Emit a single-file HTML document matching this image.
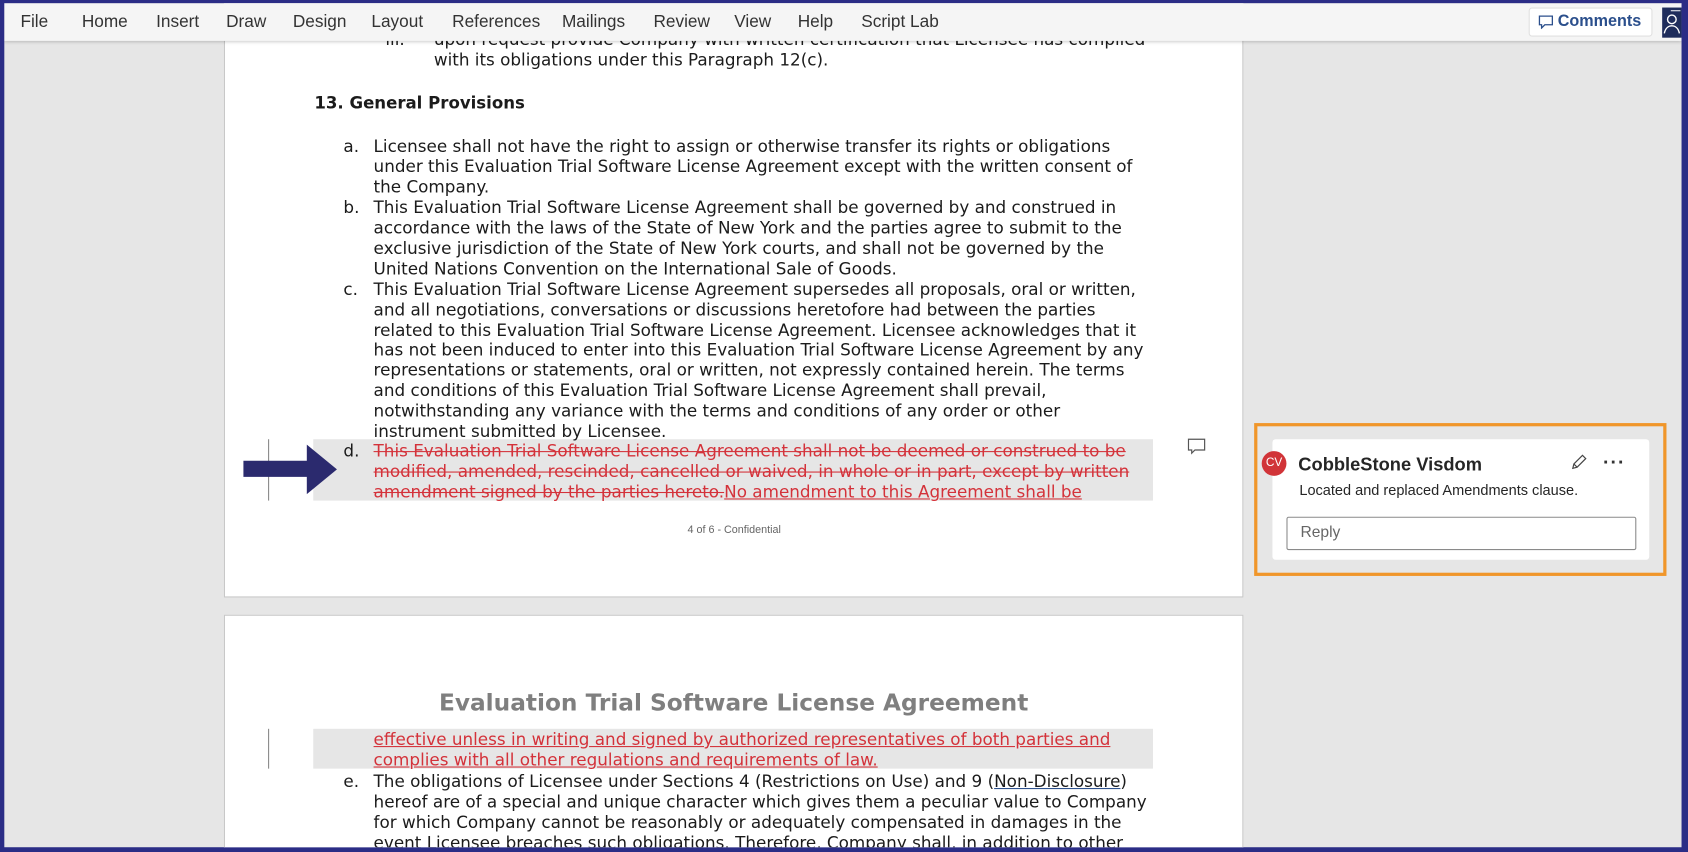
<!DOCTYPE html>
<html><head><meta charset="utf-8"><style>
html,body{margin:0;padding:0;width:1688px;height:851px;overflow:hidden;background:#2b2d86;}
#w{position:absolute;left:0;top:0;width:1568px;height:791px;transform:scale(1.07653);transform-origin:0 0;background:#2b2d86;overflow:hidden;font-family:"DejaVu Sans",Verdana,sans-serif;}
#bg{position:absolute;left:4px;top:3px;width:1558px;height:784px;background:#e6e6e6;overflow:hidden;}
.menu{position:absolute;left:0;top:0;width:1558px;height:35px;background:#f5f5f5;box-shadow:0 1px 3px rgba(0,0,0,.2);z-index:5;font-family:"Liberation Sans",sans-serif;font-size:16px;color:#333;}
.menu span{position:absolute;top:9px;}
.page{position:absolute;background:#fff;border:1px solid #c8c8c8;}
.l{position:absolute;white-space:nowrap;font-size:15.6px;line-height:19px;color:#1b1b1b;}
.r{color:#d4323a;}
.s{text-decoration:line-through;}
.u{text-decoration:underline;}
</style></head><body><div id="w"><div id="bg">
<div class="menu">
<span style="left:15px">File</span><span style="left:72px">Home</span><span style="left:141px">Insert</span><span style="left:206px">Draw</span><span style="left:268px">Design</span><span style="left:341px">Layout</span><span style="left:416px">References</span><span style="left:518px">Mailings</span><span style="left:603px">Review</span><span style="left:678px">View</span><span style="left:737px">Help</span><span style="left:796px">Script Lab</span>
<div style="position:absolute;left:1416px;top:4px;width:113px;height:25px;background:#fff;border:1px solid #e0e0e0;border-radius:3px;color:#2b4f8c;font-weight:bold;font-size:15px;">
<svg style="position:absolute;left:8px;top:6px" width="14" height="13" viewBox="0 0 14 13"><path d="M1 1h12v8H6l-3 3V9H1z" fill="none" stroke="#2b4f8c" stroke-width="1.2"/></svg>
<span style="position:absolute;left:26px;top:3px">Comments</span></div>
<div style="position:absolute;left:1540px;top:4px;width:18px;height:28px;background:#1f2d5c;"><svg width="18" height="28"><circle cx="9" cy="11" r="4" fill="none" stroke="#fff" stroke-width="1.3"/><path d="M2 24c1-5 4-7 7-7s6 2 7 7" fill="none" stroke="#fff" stroke-width="1.3"/><path d="M8 3h9" stroke="#fff"/></svg></div>
</div>
<div class="page" style="left:204px;top:-10px;width:945px;height:560px;"></div>
<div class="page" style="left:204px;top:568px;width:945px;height:230px;"></div>
<div style="position:absolute;left:287px;top:405px;width:780px;height:57px;background:#e6e6e6"></div>
<div style="position:absolute;left:287px;top:674px;width:780px;height:37px;background:#e6e6e6"></div>
<div style="position:absolute;left:245px;top:405px;width:1px;height:57px;background:#888"></div>
<div style="position:absolute;left:245px;top:674px;width:1px;height:37px;background:#888"></div>
<svg style="position:absolute;left:222px;top:408px" width="90" height="50"><path d="M0 17h59V2l28 23-28 23V32H0z" fill="#2b2a6e"/></svg>
<svg style="position:absolute;left:1099px;top:404px" width="18" height="16"><path d="M1 1h15v10H7l-3 3v-3H1z" fill="none" stroke="#555" stroke-width="1.1"/></svg>
<div class="l" style="left:354px;top:25px">iii.</div>
<div class="l" style="left:399px;top:25px">upon request provide Company with written certification that Licensee has complied</div>
<div class="l" style="left:399px;top:44px">with its obligations under this Paragraph 12(c).</div>
<div class="l" style="left:288px;top:84px;font-weight:bold;font-size:15.4px">13. General Provisions</div>
<div class="l" style="left:315px;top:124px">a.</div>
<div class="l" style="left:343px;top:124px">Licensee shall not have the right to assign or otherwise transfer its rights or obligations</div>
<div class="l" style="left:343px;top:143px">under this Evaluation Trial Software License Agreement except with the written consent of</div>
<div class="l" style="left:343px;top:162px">the Company.</div>
<div class="l" style="left:315px;top:181px">b.</div>
<div class="l" style="left:343px;top:181px">This Evaluation Trial Software License Agreement shall be governed by and construed in</div>
<div class="l" style="left:343px;top:200px">accordance with the laws of the State of New York and the parties agree to submit to the</div>
<div class="l" style="left:343px;top:219px">exclusive jurisdiction of the State of New York courts, and shall not be governed by the</div>
<div class="l" style="left:343px;top:238px">United Nations Convention on the International Sale of Goods.</div>
<div class="l" style="left:315px;top:257px">c.</div>
<div class="l" style="left:343px;top:257px">This Evaluation Trial Software License Agreement supersedes all proposals, oral or written,</div>
<div class="l" style="left:343px;top:276px">and all negotiations, conversations or discussions heretofore had between the parties</div>
<div class="l" style="left:343px;top:295px">related to this Evaluation Trial Software License Agreement. Licensee acknowledges that it</div>
<div class="l" style="left:343px;top:313px">has not been induced to enter into this Evaluation Trial Software License Agreement by any</div>
<div class="l" style="left:343px;top:332px">representations or statements, oral or written, not expressly contained herein. The terms</div>
<div class="l" style="left:343px;top:351px">and conditions of this Evaluation Trial Software License Agreement shall prevail,</div>
<div class="l" style="left:343px;top:370px">notwithstanding any variance with the terms and conditions of any order or other</div>
<div class="l" style="left:343px;top:389px">instrument submitted by Licensee.</div>
<div class="l" style="left:315px;top:407px">d.</div>
<div class="l r s" style="left:343px;top:407px">This Evaluation Trial Software License Agreement shall not be deemed or construed to be</div>
<div class="l r s" style="left:343px;top:426px">modified, amended, rescinded, cancelled or waived, in whole or in part, except by written</div>
<div class="l r" style="left:343px;top:445px"><span class="s">amendment signed by the parties hereto.</span><span class="u">No amendment to this Agreement shall be</span></div>
<div style="position:absolute;left:540px;top:484px;width:276px;text-align:center;font-family:'Liberation Sans',sans-serif;font-size:10px;color:#666">4 of 6 - Confidential</div>
<div style="position:absolute;left:204px;top:638px;width:947px;text-align:center;font-family:'DejaVu Sans',sans-serif;font-weight:bold;font-size:21.6px;color:#7f7f7f">Evaluation Trial Software License Agreement</div>
<div class="l r u" style="left:343px;top:675px">effective unless in writing and signed by authorized representatives of both parties and</div>
<div class="l r u" style="left:343px;top:694px">complies with all other regulations and requirements of law.</div>
<div class="l" style="left:315px;top:714px">e.</div>
<div class="l" style="left:343px;top:714px">The obligations of Licensee under Sections 4 (Restrictions on Use) and 9 (<span style="text-decoration:underline;text-decoration-color:#2b4f8c">Non-Disclosure</span>)</div>
<div class="l" style="left:343px;top:733px">hereof are of a special and unique character which gives them a peculiar value to Company</div>
<div class="l" style="left:343px;top:752px">for which Company cannot be reasonably or adequately compensated in damages in the</div>
<div class="l" style="left:343px;top:771px">event Licensee breaches such obligations. Therefore, Company shall, in addition to other</div>
<div style="position:absolute;left:1161px;top:390px;width:377px;height:136px;border:3px solid #f0962a;"></div>
<div style="position:absolute;left:1178px;top:405px;width:350px;height:112px;background:#fff;border-radius:3px;font-family:'Liberation Sans',sans-serif;">
<div style="position:absolute;left:-10px;top:11px;width:23px;height:23px;border-radius:50%;background:#d13438;color:#fff;font-size:11px;line-height:23px;text-align:center">CV</div>
<div style="position:absolute;left:24px;top:14px;font-size:17px;font-weight:bold;color:#252525">CobbleStone Visdom</div>
<svg style="position:absolute;left:276px;top:14px" width="16" height="16"><path d="M3 13l1-4 8-8 3 3-8 8z M4 9l3 3" fill="none" stroke="#444" stroke-width="1.1"/></svg>
<div style="position:absolute;left:307px;top:11px;font-size:18px;font-weight:bold;color:#333;letter-spacing:1px">···</div>
<div style="position:absolute;left:25px;top:40px;font-size:13.5px;color:#252525">Located and replaced Amendments clause.</div>
<div style="position:absolute;left:13px;top:72px;width:323px;height:29px;border:1px solid #8a8a8a;border-radius:2px;"><span style="position:absolute;left:12px;top:6px;font-size:14.5px;color:#666">Reply</span></div>
</div>
</div></div></body></html>
